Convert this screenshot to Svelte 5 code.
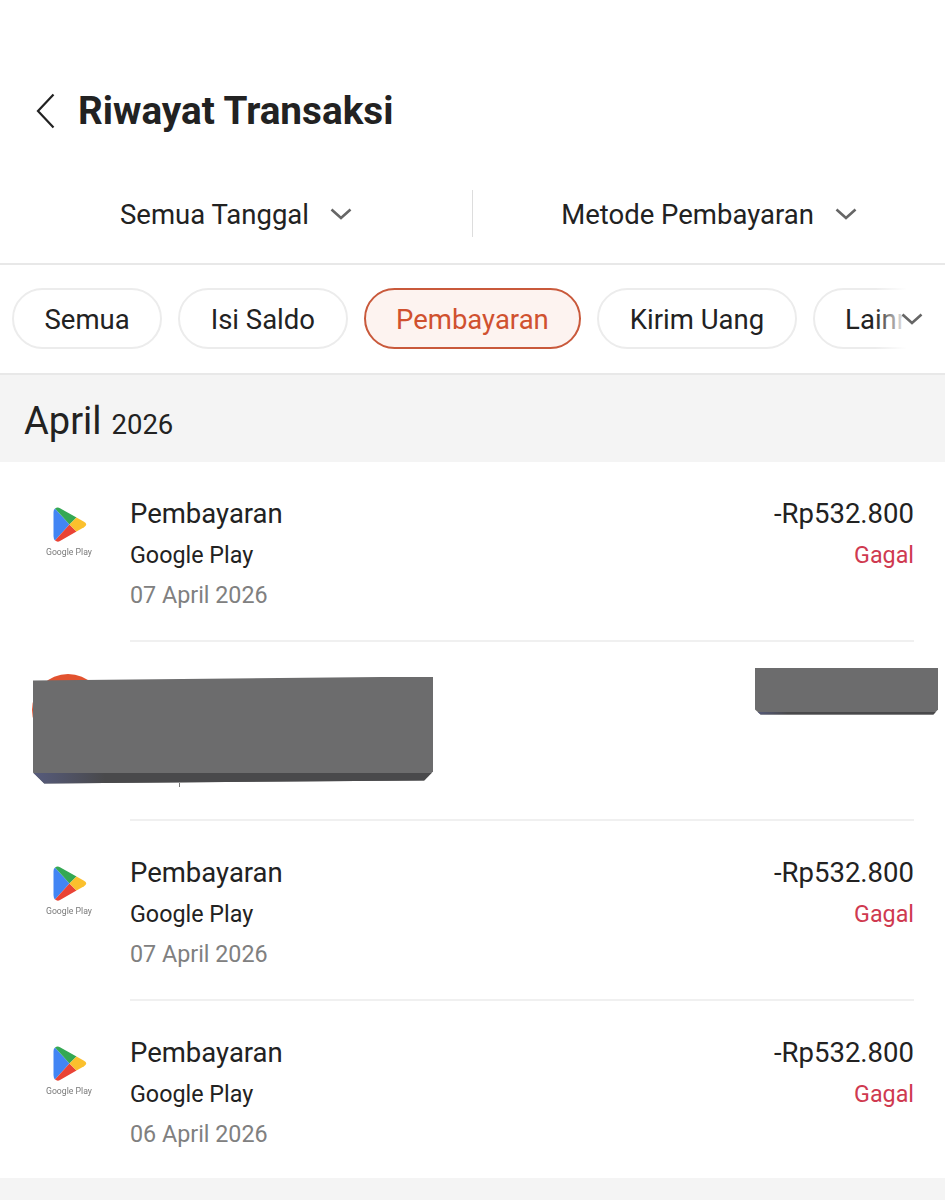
<script>
  const chips = [
    { label: "Semua" },
    { label: "Isi Saldo" },
    { label: "Pembayaran", active: true },
    { label: "Kirim Uang" },
    { label: "Lainnya" }
  ];
  const rows = [
    { date: "07 April 2026", status: "Gagal" },
    { hidden: true },
    { date: "07 April 2026", status: "Gagal" },
    { date: "06 April 2026", status: "Gagal" }
  ];
</script>

<div class="page">
  <header class="title-bar">
    <svg class="back" width="20" height="36" viewBox="0 0 20 36" aria-hidden="true">
      <path d="M17.5 1.5 L2 18 L17.5 34.500" fill="none" stroke="#222" stroke-width="2.200" />
    </svg>
    <h1>Riwayat Transaksi</h1>
  </header>

  <div class="filters">
    <div class="filter">
      <span>Semua Tanggal</span>
      {@render chevron()}
    </div>
    <div class="sep"></div>
    <div class="filter">
      <span>Metode Pembayaran</span>
      {@render chevron()}
    </div>
  </div>

  <div class="chips-wrap">
    <div class="chips">
      {#each chips as chip}
        <div class="chip" class:active={chip.active}>{chip.label}</div>
      {/each}
    </div>
    <div class="fade">{@render chevron()}</div>
  </div>

  <div class="month"><span class="m">April</span><span class="y">2026</span></div>

  <div class="list">
    {#each rows as row}
      <div class="row">
        <div class="logo">
          {#if row.hidden}
            <div class="orange"></div>
          {:else}
            <svg width="36" height="38" viewBox="0 0 36 38" aria-hidden="true">
              <path d="M2 2.500 Q0.500 3.800 0.500 6 V30 Q0.500 33 2 34.500 L16.500 18.500 Z" fill="#4285f4" />
              <path d="M2 2.500 Q4.500 0.800 7 2.200 L23.500 11.500 L16.500 18.500 Z" fill="#34a853" />
              <path d="M2 34.500 Q4.500 36.500 7 35 L23.500 25.500 L16.500 18.500 Z" fill="#ea4335" />
              <path d="M23.500 11.500 L31 15.800 Q35.500 18.500 31 21.200 L23.500 25.500 L16.500 18.500 Z" fill="#fbc02d" />
            </svg>
            <span class="logo-text">Google Play</span>
          {/if}
        </div>
        <div class="info">
          {#if row.hidden}
            <div class="redact big"></div>
            <div class="redact small"></div>
            <div class="tick"></div>
          {:else}
            <div class="top"><span class="kind">Pembayaran</span><span class="amount">-Rp532.800</span></div>
            <div class="mid"><span>Google Play</span><span class="fail">{row.status}</span></div>
            <div class="date">{row.date}</div>
          {/if}
        </div>
      </div>
    {/each}
  </div>
</div>

{#snippet chevron()}
  <svg class="chev" width="22" height="12" viewBox="0 0 22 12" aria-hidden="true">
    <path d="M1.500 1.500 L11 10 L20.500 1.500" fill="none" stroke="#666" stroke-width="2.600" />
  </svg>
{/snippet}

<style>
  :global(body) {
    margin: 0;
    background: #f4f4f4;
  }

  .page {
    height: 1200px;
    overflow: hidden;
    background: #f4f4f4;
    font-family: Roboto, sans-serif;
    color: #222;
  }

  .title-bar {
    height: 190px;
    box-sizing: border-box;
    padding: 93px 0 0 36px;
    display: flex;
    align-items: flex-start;
    gap: 22px;
    background: #fff;
  }

  .back {
    flex: none;
  }

  h1 {
    margin: 0;
    font-size: 38.700px;
    line-height: 36px;
    font-weight: 700;
    color: #222;
  }

  .filters {
    height: 73px;
    display: flex;
    align-items: flex-start;
    background: #fff;
    border-bottom: 2px solid #e8e8e8;
  }

  .filter {
    flex: 1;
    height: 48px;
    display: flex;
    align-items: center;
    justify-content: center;
    gap: 21px;
    font-size: 27.500px;
  }

  .sep {
    width: 1px;
    height: 47px;
    background: #ddd;
  }

  .chips-wrap {
    position: relative;
    height: 108px;
    overflow: hidden;
    background: #fff;
    border-bottom: 2px solid #e8e8e8;
  }

  .chips {
    display: flex;
    gap: 16px;
    padding: 23px 0 0 12px;
    width: 1100px;
  }

  .chip {
    height: 61px;
    box-sizing: border-box;
    padding: 1px 30.500px 0;
    display: flex;
    align-items: center;
    border: 2px solid #ececec;
    border-radius: 31px;
    font-size: 27.500px;
  }

  .chip.active {
    color: #d0512f;
    background: #fdf3f0;
    border-color: #c9593b;
  }

  .fade {
    position: absolute;
    top: 0;
    right: 0;
    bottom: 0;
    width: 70px;
    display: flex;
    align-items: center;
    padding-left: 26px;
    box-sizing: border-box;
    background: linear-gradient(to right, rgba(255, 255, 255, 0), #fff 45%);
  }

  .month {
    height: 87px;
    box-sizing: border-box;
    padding: 22px 24px 0;
    line-height: 48px;
  }

  .m {
    font-size: 38px;
  }

  .y {
    font-size: 27.500px;
    margin-left: 10px;
  }

  .list {
    background: #fff;
  }

  .row {
    display: flex;
    height: 179.500px;
  }

  .row:last-child {
    height: 177.500px;
  }

  .logo {
    position: relative;
    width: 130px;
    flex: none;
    box-sizing: border-box;
    padding: 44px 0 0 53px;
  }

  .logo svg {
    display: block;
    filter: blur(0.400px);
  }

  .logo-text {
    position: absolute;
    left: 46px;
    top: 84px;
    font-size: 8.700px;
    line-height: 13px;
    color: #7a7a7a;
    white-space: nowrap;
    filter: blur(0.300px);
  }

  .orange {
    position: absolute;
    left: 32px;
    top: 32px;
    width: 72px;
    height: 72px;
    border-radius: 50%;
    background: #e2522f;
  }

  .info {
    position: relative;
    flex: 1;
    margin-right: 31px;
    padding-top: 37px;
    border-bottom: 2px solid #f0f0f0;
  }

  .row:last-child .info {
    border-bottom: 0;
  }

  .top,
  .mid {
    display: flex;
    justify-content: space-between;
  }

  .top {
    font-size: 27.500px;
    line-height: 30px;
  }

  .mid {
    margin-top: 11px;
    font-size: 23.300px;
    line-height: 30px;
  }

  .fail {
    color: #cf3a50;
  }

  .date {
    margin-top: 10px;
    font-size: 23.300px;
    line-height: 30px;
    color: #808080;
  }

  .redact {
    position: absolute;
    background:
      linear-gradient(to right, #565b7c, #49494b 18%, #49494b 100%) bottom / 100% 12px no-repeat,
      #6c6c6d;
  }

  .redact.big {
    left: -97px;
    top: 35px;
    width: 400px;
    height: 108px;
    clip-path: polygon(0 4px, 100% 0, 100% 95px, 97.800% 104px, 2.800% 107px, 0 96px);
  }

  .redact.small {
    left: 625px;
    top: 26px;
    width: 183px;
    height: 48px;
    background:
      linear-gradient(to right, #565b7c, #49494b 18%, #49494b 100%) bottom / 100% 4px no-repeat,
      #6c6c6d;
    clip-path: polygon(0 0, 100% 0, 100% 42px, 97.500% 47px, 3% 47px, 0 42px);
  }

  .tick {
    position: absolute;
    left: 49px;
    top: 141px;
    width: 1px;
    height: 4px;
    background: #777;
  }
</style>
